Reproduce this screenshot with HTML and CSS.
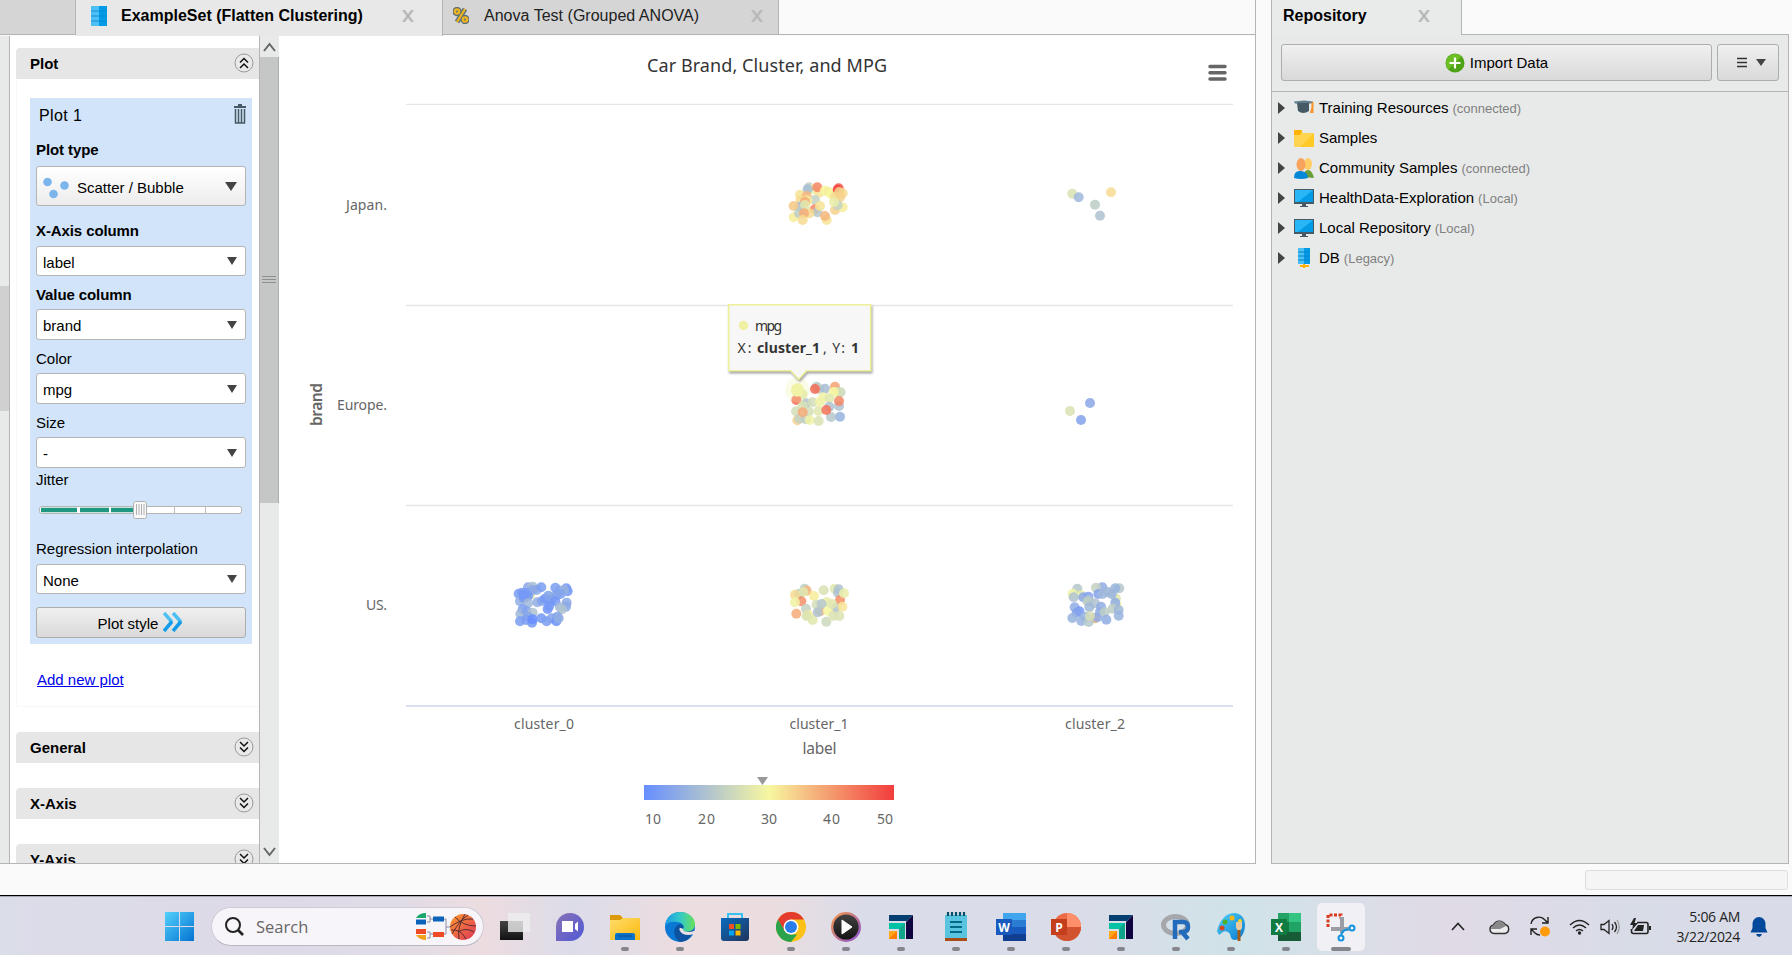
FILE: index.html
```html
<!DOCTYPE html>
<html lang="en">
<head>
<meta charset="utf-8">
<title>ExampleSet (Flatten Clustering)</title>
<link rel="stylesheet" href="styles.css">
</head>
<body>
<svg class="defs" width="0" height="0">
  <defs>
    <linearGradient id="mpg"><stop offset="0" stop-color="#668eff"/><stop offset=".5" stop-color="#f7f7a0"/><stop offset="1" stop-color="#f23c3c"/></linearGradient>
    <linearGradient id="win" x2="1" y2="1"><stop offset="0" stop-color="#52d1fb"/><stop offset="1" stop-color="#0473d2"/></linearGradient>
    <linearGradient id="fold" x2="1" y2="1"><stop offset="0" stop-color="#ffdc6a"/><stop offset="1" stop-color="#fbb90f"/></linearGradient>
    <linearGradient id="chat" x2="1" y2="1"><stop offset="0" stop-color="#8a72b5"/><stop offset="1" stop-color="#5059d6"/></linearGradient>
    <linearGradient id="edge" x2="1" y2="0"><stop offset="0" stop-color="#1a9be8"/><stop offset=".5" stop-color="#35c8c8"/><stop offset="1" stop-color="#68e05a"/></linearGradient>
    <linearGradient id="ring" x2="1" y2="1"><stop offset="0" stop-color="#f79a4a"/><stop offset="1" stop-color="#8a4fd0"/></linearGradient>
    <linearGradient id="store" x2="1" y2="1"><stop offset="0" stop-color="#0a6cc0"/><stop offset="1" stop-color="#20345c"/></linearGradient>
    <linearGradient id="ball" x2="1" y2="1"><stop offset="0" stop-color="#ff9a2e"/><stop offset="1" stop-color="#dd3558"/></linearGradient>
    <linearGradient id="paint" x2="1" y2="1"><stop offset="0" stop-color="#4fd4f8"/><stop offset="1" stop-color="#0a78d0"/></linearGradient>
    <linearGradient id="dark" x2="0" y2="1"><stop offset="0" stop-color="#444"/><stop offset="1" stop-color="#111"/></linearGradient>
  </defs>
  <symbol id="close" viewBox="0 0 14 14"><path d="M1 1h3l3 4 3-4h3L8.700 7 13 13h-3L7 9l-3 4H1l4.300-6z" fill="#b9b9b9"/></symbol>
  <symbol id="up2" viewBox="0 0 20 20"><circle cx="10" cy="10" r="9" fill="#e9e9e9" stroke="#999"/><path d="M6 9.500L10 5.500l4 4M6 15l4-4 4 4" fill="none" stroke="#111" stroke-width="1.500"/></symbol>
  <symbol id="down2" viewBox="0 0 20 20"><circle cx="10" cy="10" r="9" fill="#e9e9e9" stroke="#999"/><path d="M6 5l4 4 4-4M6 10.500l4 4 4-4" fill="none" stroke="#111" stroke-width="1.500"/></symbol>
  <symbol id="stack" viewBox="0 0 16 20"><path d="M0 0h8v20H0z" fill="#4cc0f5"/><path d="M8 0h8v20H8z" fill="#039be5"/><path d="M0 5h16M0 10h16M0 15h16" stroke="#0284cc" stroke-width=".8"/></symbol>
  <symbol id="monitor" viewBox="0 0 20 18"><path d="M0 0h20v15H0z" fill="#455a64"/><path d="M1 1h18v12H1z" fill="#039be5"/><path d="M1 1h18L4 13H1z" fill="#29b6f6"/><path d="M8 15h4v2h2v1H6v-1h2z" fill="#455a64"/></symbol>
  <symbol id="flow" viewBox="0 0 24 24"><path d="M0 0h24l-6 6H0z" fill="#033f70"/><path d="M24 0v24h-7V7z" fill="#0f0340"/><path d="M0 8h16v16h-6V13H0z" fill="#10a58b"/><path d="M0 8h16l-6 6H0z" fill="#00c2a4"/><path d="M0 16h8v8H0z" fill="#ff7d05"/><path d="M0 16h8l-8 8z" fill="#ffa61a"/></symbol>
</svg>

<div class="app">
  <section class="results">
    <div class="tabs">
      <div class="tab tab-stub"></div>
      <div class="tab tab-set active"><svg width="16" height="20"><use href="#stack"/></svg><span class="t-set">ExampleSet (Flatten Clustering)</span><svg class="x" width="14" height="14"><use href="#close"/></svg></div>
      <div class="tab tab-anova"><svg width="16" height="17" viewBox="0 0 16 17" fill="none"><g stroke="#5e7078" stroke-width="5"><circle cx="4" cy="4.500" r="2.200"/><circle cx="12" cy="12.500" r="2.200"/><path d="M12 2L4 15"/></g><g stroke="#f1b51c" stroke-width="2.200"><circle cx="4" cy="4.500" r="2.200"/><circle cx="12" cy="12.500" r="2.200"/><path d="M12 2L4 15"/></g></svg><span class="t-anova">Anova Test (Grouped ANOVA)</span><svg class="x" width="14" height="14"><use href="#close"/></svg></div>
      <div class="tab-rest"></div>
    </div>
    <div class="content">
      <div class="rail"><div class="rail-thumb"></div></div>
      <div class="panel">
        <div class="head"><b>Plot</b><svg width="20" height="20"><use href="#up2"/></svg></div>
        <div class="body">
          <div class="card">
            <div class="card-title"><span>Plot 1</span><svg width="12" height="20" viewBox="0 0 12 20"><path d="M4 0h4v2H4zM0 2h12v2H0z" fill="#455a64"/><path d="M1.500 5v14h9V5M4.500 5v14M7.500 5v14" fill="none" stroke="#455a64" stroke-width="1.500"/></svg></div>
            <label class="bold l28">Plot type</label>
            <div class="select big"><svg width="26" height="22" viewBox="0 0 26 22" fill="#7cb5ec"><circle cx="4.500" cy="5" r="4.300"/><circle cx="21.500" cy="8.500" r="4.300"/><circle cx="10.500" cy="17" r="4.300"/></svg><span>Scatter / Bubble</span><i></i></div>
            <label class="bold l40">X-Axis column</label>
            <div class="select s30"><span>label</span><i></i></div>
            <label class="bold">Value column</label>
            <div class="select"><span>brand</span><i></i></div>
            <label>Color</label>
            <div class="select"><span>mpg</span><i></i></div>
            <label>Size</label>
            <div class="select"><span>-</span><i></i></div>
            <label class="l28">Jitter</label>
            <svg class="slider" width="204" height="20" viewBox="0 0 204 20"><rect x=".5" y="6.500" width="202" height="7" rx="2" fill="#fff" stroke="#b5b5b5"/><path d="M2 10h36M41 10h29M72 10h24" stroke="#1e9880" stroke-width="4.500"/><path d="M135.500 6v8M166.500 6v8" stroke="#bbb"/><rect x="94.500" y="1.500" width="13" height="17" rx="2" fill="#f8f8f8" stroke="#b0b0b0"/><path d="M97.500 4v11M100 4v11M102.500 4v11M105 4v11" stroke="#a0a0a0" stroke-width=".8"/></svg>
            <label class="l41">Regression interpolation</label>
            <div class="select s30"><span>None</span><i></i></div>
            <div class="button style-btn"><span>Plot style</span><svg width="21" height="20" viewBox="0 0 21 20" fill="none" stroke-width="3.500"><path d="M1 1l8 9M10 1l8 9" stroke="#4cc0f5"/><path d="M9 9.500L1 19M18 9.500L10 19" stroke="#129be8"/></svg></div>
          </div>
          <a class="add">Add new plot</a>
        </div>
        <div class="head"><b>General</b><svg width="20" height="20"><use href="#down2"/></svg></div>
        <div class="head gap"><b>X-Axis</b><svg width="20" height="20"><use href="#down2"/></svg></div>
        <div class="head gap"><b>Y-Axis</b><svg width="20" height="20"><use href="#down2"/></svg></div>
      </div>
      <div class="scroll">
        <svg width="20" height="21" fill="none" stroke="#666" stroke-width="2"><path d="M4 15l5.500-7L15 15"/></svg>
        <div class="thumb"><svg width="14" height="9"><path d="M0 .5h14M0 3.500h14M0 6.500h14" stroke="#8d8f8e"/></svg></div>
        <svg class="sdown" width="20" height="21" fill="none" stroke="#666" stroke-width="2"><path d="M4 6l5.500 7L15 6"/></svg>
      </div>
      <svg class="chart" width="976" height="827" viewBox="279 36 976 827">
        <path d="M406 104.300h827M406 305.500h827M406 505.500h827" stroke="#e6e6e6" stroke-width="1.300"/>
        <path d="M406 706h827" stroke="#ccd6eb" stroke-width="1.500"/>
        <text class="title" x="647" y="72" textLength="240">Car Brand, Cluster, and MPG</text>
        <g class="axis" text-anchor="end"><text x="387" y="210" textLength="41">Japan.</text><text x="387" y="410" textLength="50">Europe.</text><text x="387" y="610" textLength="21">US.</text></g>
        <text class="name strong" transform="translate(322 404.500) rotate(-90)" text-anchor="middle" textLength="43">brand</text>
        <g class="axis" text-anchor="middle"><text x="544" y="729" textLength="60">cluster_0</text><text x="819" y="729" textLength="59">cluster_1</text><text x="1095" y="729" textLength="60">cluster_2</text></g>
        <text class="name" x="819.500" y="754" text-anchor="middle" textLength="34">label</text>
        <path d="M1210 66.500h15M1210 72.700h15M1210 79h15" stroke="#666" stroke-width="3.500" stroke-linecap="round"/>
        <rect x="644" y="785" width="250" height="15" fill="url(#mpg)"/><path d="M757 777h11l-5.500 8z" fill="#999"/>
        <g class="axis"><text x="645" y="824" textLength="16">10</text><text x="698" y="824" textLength="17">20</text><text x="761" y="824" textLength="16">30</text><text x="823" y="824" textLength="17">40</text><text x="877" y="824" textLength="16">50</text></g>
        <g id="points"></g>
        <g class="tip"><path d="M728.700 304.700h142v66h-64l-8 8.500-8-8.500h-62z" fill="#f7f7f7" stroke="#eef09a" stroke-width="1.600"/></g>
        <circle cx="743.500" cy="325.500" r="4.700" fill="#f0f0a3"/>
        <g class="tiptext"><text x="755" y="331" textLength="27">mpg</text><text x="737.500" y="353" textLength="14">X:</text><text class="b" x="757" y="353" textLength="63">cluster_1</text><text x="823" y="353" textLength="22">, Y:</text><text class="b" x="851" y="353">1</text></g>
      </svg>
    </div>
  </section>

  <section class="repo">
    <div class="rtabs"><div class="rtab"><b>Repository</b><svg width="14" height="14"><use href="#close"/></svg></div><div class="rrest"></div></div>
    <div class="rpanel">
      <div class="toolbar">
        <div class="button import"><svg width="20" height="20" viewBox="0 0 20 20"><circle cx="10" cy="10" r="9.500" fill="#4ea314"/><path d="M3.300 16.700A9.500 9.500 0 0116.700 3.300z" fill="#6bbf25"/><path d="M10 4.500v11M4.500 10h11" stroke="#fff" stroke-width="2.200"/></svg><span>Import Data</span></div>
        <div class="button more"><svg width="10" height="11"><path d="M0 1.500h10M0 5.500h10M0 9.500h10" stroke="#333" stroke-width="1.600"/></svg><i></i></div>
      </div>
      <ul class="tree">
        <li><i></i><svg width="20" height="20" viewBox="0 0 20 20"><path d="M0 3.500l10-1 9 1-1 2H1z" fill="#607d8b"/><path d="M3 5h12v8q-6 4-11 0z" fill="#455a64"/><path d="M17.500 4v5l-1.500 6h3.500V4z" fill="#f8932b"/></svg><span class="w1">Training Resources</span><small>(connected)</small></li>
        <li><i></i><svg width="20" height="20" viewBox="0 0 20 20"><path d="M0 2h8v3h12v14H0z" fill="#ffca28"/><path d="M0 5h20L6 19H0z" fill="#ffd54f"/><path d="M0 2h7l1.500 3H6.500v2H0z" fill="#ffb300"/></svg><span>Samples</span></li>
        <li><i></i><svg width="20" height="21" viewBox="0 0 20 21"><ellipse cx="14" cy="6" rx="4" ry="6" fill="#ffcc66"/><path d="M9 19q1-7 5-7t6 8z" fill="#689f38"/><ellipse cx="7" cy="6.500" rx="4.500" ry="6.500" fill="#f8a35d"/><path d="M0 20q0-8 7-7t7 7q-7 2-14 0z" fill="#0388d8"/></svg><span>Community Samples</span><small>(connected)</small></li>
        <li><i></i><svg width="20" height="18"><use href="#monitor"/></svg><span class="w4">HealthData-Exploration</span><small>(Local)</small></li>
        <li><i></i><svg width="20" height="18"><use href="#monitor"/></svg><span>Local Repository</span><small>(Local)</small></li>
        <li><i></i><svg width="20" height="20" viewBox="0 0 20 20"><path d="M4 0h6v16H4z" fill="#4cc0f5"/><path d="M10 0h6v16h-6z" fill="#039be5"/><path d="M4 4h12M4 8h12M4 12h12" stroke="#0284cc"/><path d="M9 16h2v1h4v2h-4v1H9v-1H6v-2h3z" fill="#ffb300"/></svg><span>DB</span><small>(Legacy)</small></li>
      </ul>
    </div>
  </section>
</div>
<div class="status"><div class="progress"></div></div>

<footer class="taskbar">
  <svg class="start" width="29" height="29" viewBox="0 0 29 29"><path d="M0 0h14v14H0zM15 0h14v14H15zM0 15h14v14H0zM15 15h14v14H15z" fill="url(#win)"/></svg>
  <div class="search">
    <svg width="19" height="19" viewBox="0 0 19 19" fill="none" stroke="#222" stroke-width="2"><circle cx="8" cy="8" r="7"/><path d="M13 13l5 5" stroke-width="2.600"/></svg>
    <span>Search</span>
    <svg class="bracket" width="62" height="30" viewBox="0 0 62 30"><g fill="none" stroke="#8b8aa0"><path d="M11 4h3v6h-3M14 7h4M11 20h3v6h-3M14 22h4M27 7h3v15h-3M30 15h4"/></g><path d="M0 6q3-5 10-5v5z" fill="#18a76a"/><path d="M0 7.500h10v5H0zM17 4.500h11v5H17z" fill="#0a62bb"/><path d="M0 17h10v5H0zM17 20h11v5H17z" fill="#ee4a23"/><path d="M0 23h10v5q-7 0-10-5z" fill="#f5a01d"/><circle cx="47" cy="15" r="13" fill="url(#ball)"/><path d="M39 5q8 9 21 9M34 15q12-9 23-8M36 22q8-14 16-19M43 27q-2-12 6-25M50 27q-5-10-15-9M58 20q-8-5-16 0" fill="none" stroke="#4b2733" stroke-width=".9"/></svg>
  </div>
  <div class="icons">
    <div><svg viewBox="0 0 30 30"><path d="M0 9h23v19H0z" fill="url(#dark)"/><path d="M8 1h22v19H8z" fill="#eee" opacity=".8"/></svg></div>
    <div><svg viewBox="0 0 30 30"><path d="M1 29V15A14 14 0 1115 29z" fill="url(#chat)"/><path d="M7 9h11v11H7zM20 12l3-2.500v10L20 17z" fill="#fff"/></svg></div>
    <div class="run"><svg viewBox="0 0 30 30"><path d="M0 3h10l3 3v5H0z" fill="#dc9a09"/><path d="M0 8h10l3-2h17v22H0z" fill="url(#fold)"/><path d="M5 28v-5q0-2 2-2h16q2 0 2 2v5z" fill="#0b72cc"/><path d="M8 24h14" stroke="#0a4a8c"/></svg></div>
    <div class="run"><svg viewBox="0 0 30 30"><circle cx="15" cy="15" r="15" fill="#0a78d4"/><path d="M0 14C1 5 7 0 15 0c9 0 15 6 15 12 0 5-4 8-9 8-3 0-4-1-3-3 2-4-2-7-6-7C6 9 2 11 0 14z" fill="url(#edge)"/><path d="M18 17q-1 3 3 3t8-2q1 2-2 4-3 7-12 8C8 26 7 14 15 12q5 1 3 5z" fill="#0e53a1"/><path d="M18 17c-2-2-5-1-3 2 2 4 8 5 14 3l2-4q-4 2-8 2-5 0-5-3z" fill="#e9dfe5"/></svg></div>
    <div><svg viewBox="0 0 30 30"><path d="M8 7V2h14v5" fill="none" stroke="#38c2f1" stroke-width="2"/><path d="M1 6h28v20q0 3-3 3H4q-3 0-3-3z" fill="url(#store)"/><path d="M9 12h5v5H9z" fill="#f25022"/><path d="M15.500 12h5v5h-5z" fill="#7fba00"/><path d="M9 18.500h5v5H9z" fill="#00a4ef"/><path d="M15.500 18.500h5v5h-5z" fill="#ffb900"/></svg></div>
    <div class="run"><svg viewBox="0 0 30 30"><circle cx="15" cy="15" r="15" fill="#fbc116"/><path d="M2 7.500A15 15 0 0128 7.500H15L8 19z" fill="#e33b2e"/><path d="M2 7.500L8.500 18.700 15 22.500h6L15 30A15 15 0 012 7.500z" fill="#2ba24c"/><circle cx="15" cy="15" r="7.500" fill="#fff"/><circle cx="15" cy="15" r="6" fill="#2a7de9"/></svg></div>
    <div class="run"><svg viewBox="0 0 30 30"><circle cx="15" cy="15" r="13.800" fill="url(#dark)" stroke="url(#ring)" stroke-width="2.400"/><path d="M11 8v14l10-7z" fill="#fff" stroke="#fff" stroke-linejoin="round"/></svg></div>
    <div class="run"><svg class="small" viewBox="0 0 24 24"><use href="#flow"/></svg></div>
    <div class="run"><svg viewBox="0 0 30 30"><path d="M4 3h22v23H4z" fill="#58c4e0"/><path d="M4 26h22v3H4z" fill="#a84c13"/><path d="M9 10h12M9 15h12M9 20h12" stroke="#056a83" stroke-width="1.800"/><path d="M7 0v4M11 0v4M15 0v4M19 0v4M23 0v4" stroke="#07506a" stroke-width="2.200"/></svg></div>
    <div class="run"><svg viewBox="0 0 30 30"><path d="M7 1h23v28H7z" fill="#2b7cd3"/><path d="M7 1h23v7H7z" fill="#41a5ee"/><path d="M7 15h23v7H7z" fill="#185abd"/><path d="M7 22h23v7H7z" fill="#103f91"/><path d="M0 7h16v16H0z" fill="#185abd"/><text x="8" y="19.500">W</text></svg></div>
    <div class="run"><svg viewBox="0 0 30 30"><circle cx="16" cy="15" r="14" fill="#ed6c47"/><path d="M16 1a14 14 0 0114 14H16z" fill="#ff8f6b"/><path d="M2 15h28a14 14 0 01-28 0z" fill="#d35230"/><path d="M0 7h16v16H0z" fill="#c43e1c"/><text x="8" y="19.500">P</text></svg></div>
    <div class="run"><svg class="small" viewBox="0 0 24 24"><use href="#flow"/></svg></div>
    <div class="run"><svg viewBox="0 0 30 30"><ellipse cx="14.500" cy="13" rx="12" ry="8.500" fill="none" stroke="#a5a7ab" stroke-width="5"/><path d="M14 27V10h8q5 0 5 5t-5 5h-4M21 20l6 7" fill="none" stroke="#246bbb" stroke-width="4.500"/></svg></div>
    <div class="run"><svg viewBox="0 0 30 30"><path d="M1 19C3 10 9 1 18 1c7 0 11 5 11 12 0 8-4 14-10 15-6 0-3-6-7-8s-6 1-9 3z" fill="url(#paint)"/><circle cx="9" cy="10" r="2.500" fill="#4fae2a"/><circle cx="16" cy="6" r="2.500" fill="#f5b51b"/><circle cx="6" cy="16" r="2.500" fill="#d24726"/><circle cx="24" cy="9" r="2" fill="#f5d21b"/><path d="M20 10h6v6l-2 3h-2l-2-3z" fill="#e8c9a0"/><path d="M23 18v11" stroke="#a35a16" stroke-width="3"/></svg></div>
    <div class="run"><svg viewBox="0 0 30 30"><path d="M7 1h23v28H7z" fill="#21a366"/><path d="M18 1h12v9H18z" fill="#33c481"/><path d="M7 10h11v10H7z" fill="#107c41"/><path d="M7 20h23v9H7z" fill="#185c37"/><path d="M0 7h16v16H0z" fill="#107c41"/><text x="8" y="19.500">X</text></svg></div>
    <div class="run current"><svg viewBox="0 0 30 30" fill="none"><path d="M2 15V3h13v4" stroke="#d83b1e" stroke-width="3" stroke-dasharray="3 1.500"/><path d="M16 5v16M5 17h18" stroke="#9b9fa5" stroke-width="4"/><circle cx="15" cy="26" r="2.500" stroke="#1494df" stroke-width="2"/><circle cx="26" cy="16" r="2.500" stroke="#1494df" stroke-width="2"/><path d="M15 23l2-4 5-2" stroke="#1494df" stroke-width="2"/></svg></div>
  </div>
  <div class="tray">
    <svg width="14" height="9" viewBox="0 0 14 9" fill="none" stroke="#222" stroke-width="1.600"><path d="M1 8l6-6.500L13 8"/></svg>
    <svg class="cloud" width="21" height="16" viewBox="0 0 21 16"><path d="M5 14.500a4.300 4.300 0 01-.5-8.500A6.500 6.500 0 0116 5.500a4.600 4.600 0 010 9z" fill="#ececef" stroke="#333" stroke-width="1.500"/><path d="M2 10Q3 6 5 6 8 0 14 3l3 4-6 3z" fill="#888"/></svg>
    <svg class="sync" width="22" height="21" viewBox="0 0 22 21" fill="none" stroke="#222" stroke-width="1.400"><path d="M2 8a8 8 0 0114-4l3 3M19 1v6h-6M2 19v-6h6M2 13l4 4q2 2 5 2"/><circle cx="16" cy="15.500" r="5" fill="#ff9a0a" stroke="none"/></svg>
    <svg class="wifi" width="21" height="16" viewBox="0 0 21 16" fill="none" stroke="#222" stroke-width="1.400"><path d="M1 6q9.500-9 19 0M4 9q6.500-6 13 0M7 12q3.500-3.200 7 0"/><circle cx="10.500" cy="14" r="1" fill="#222"/></svg>
    <svg class="vol" width="20" height="16" viewBox="0 0 20 16" fill="none" stroke="#222" stroke-width="1.300"><path d="M1 5.500h3l5-4v13l-5-4H1zM12 5q2 3 0 6M14.500 3q4 5 0 10"/><path d="M17 1q4.500 7 0 14" stroke="#999"/></svg>
    <svg class="bat" width="22" height="18" viewBox="0 0 22 18"><path d="M8 4.500h9.500q1.500 0 1.500 2v7q0 2-1.500 2h-13q-2 0-2-2V11" fill="none" stroke="#222" stroke-width="1.600"/><path d="M20 8h2v4h-2zM5 13h9l1-6H9z" fill="#222"/><path d="M5 0L1 7h3l-1 5 6-7H5.500L7 0z" fill="#222"/></svg>
    <div class="clock"><span>5:06 AM</span><span>3/22/2024</span></div>
    <svg class="bell" width="18" height="20" viewBox="0 0 18 20" fill="#04489c"><path d="M9 0a6.500 6.500 0 016.500 6.500V11l2 4.500H.5l2-4.500V6.500A6.500 6.500 0 019 0zM6 17h6q-1 3-3 3t-3-3z"/></svg>
  </div>
</footer>
<script src="points.js"></script>
</body>
</html>
```
FILE: styles.css
```css
* { box-sizing: border-box; }
body { margin: 0; width: 1792px; height: 955px; overflow: hidden; display: flex; flex-direction: column; background: #fafafa; color: #000; font: 15px/18px "Liberation Sans", Arial, sans-serif; }
svg { display: block; flex: none; }
.defs { position: absolute; }
.app { display: flex; height: 864px; }

.results { width: 1256px; display: flex; flex-direction: column; border-right: 1px solid #b5b5b5; border-bottom: 1px solid #b5b5b5; }
.tabs { display: flex; height: 36px; }
.tab { display: flex; align-items: center; height: 35px; background: #d5d5d5; border-right: 1px solid #b5b5b5; border-bottom: 1px solid #b5b5b5; font-size: 16px; padding-bottom: 3px; }
.tab-stub { width: 76px; }
.tab.active { width: 367px; height: 36px; background: #e8e8e8; border-bottom: 0; font-weight: bold; padding-left: 15px; padding-bottom: 4px; }
.tab-anova { width: 336px; padding-left: 10px; color: #222; }
.t-set { margin-left: 14px; width: 280px; white-space: nowrap; }
.t-anova { margin-left: 15px; width: 266px; letter-spacing: .02px; white-space: nowrap; }
.tab-rest { flex: 1; height: 35px; border-bottom: 1px solid #b5b5b5; }
.content { display: flex; height: 827px; background: #fff; }
.rail { width: 10px; background: #e8eae9; border-right: 1px solid #b5b5b5; padding-top: 250px; }
.rail-thumb { height: 125px; background: #cfd0cf; }

.panel { width: 249px; height: 827px; overflow: hidden; padding: 12px 0 0 6px; }
.head { display: flex; justify-content: space-between; align-items: center; height: 31px; background: #e6e6e6; border-radius: 4px 0 0 0; padding: 0 5px 2px 14px; }
.head b { padding-top: 3px; }
.head.gap { margin-top: 25px; }
.body { height: 628px; margin-bottom: 25px; border: 1px solid #f7f7f7; border-top: 0; border-right: 0; padding: 19px 0 0 13px; }
.card { width: 222px; height: 546px; background: #d1e4f9; padding: 0 6px; display: flex; flex-direction: column; }
.card-title { display: flex; justify-content: space-between; height: 40px; padding: 6px 0 0 3px; font-size: 16px; }
.card-title span { padding-top: 3px; letter-spacing: .4px; }
label { height: 33px; display: flex; align-items: flex-end; padding-bottom: 5px; }
label.bold { font-weight: bold; letter-spacing: -.1px; }
label.l28 { height: 28px; padding-bottom: 7px; }
label.l40 { height: 40px; padding-bottom: 6px; }
label.l41 { height: 44px; padding-bottom: 6px; }
.select { display: flex; align-items: center; height: 31px; background: #fff; border: 1px solid #b5b5b5; border-radius: 3px; padding: 3px 8px 0 6px; }
.select.s30 { height: 30px; }
.select.big { height: 40px; background: linear-gradient(#fff, #ececec); }
.select.big span { margin-left: 8px; padding-bottom: 0; }
.select i, .more i { margin-left: auto; border: 5px solid transparent; border-top: 8px solid #444; border-bottom: 0; margin-bottom: 3px; }
.select.big i { border-width: 9px 6px 0; }
.slider { margin: 4px 0 0 3px; }
.button { display: flex; align-items: center; justify-content: center; background: linear-gradient(#f0f0f0, #d9d9d9); border: 1px solid #adadad; border-radius: 3px; }
.style-btn { height: 31px; margin-top: 13px; padding-top: 2px; gap: 5px; }
.style-btn svg { margin-top: -3px; }
.add { display: block; color: #00e; text-decoration: underline; margin: 27px 0 0 7px; }

.scroll { width: 20px; background: #e8eae9; display: flex; flex-direction: column; border-left: 1px solid #b5b5b5; }
.thumb { height: 446px; background: #c5c6c6; border-right: 1px solid #adadad; padding: 219px 0 0 2px; }
.sdown { margin-top: auto; }

.title { font: 18px "Noto Sans", sans-serif; fill: #333; }
.axis, .tiptext { font: 14px "Noto Sans", sans-serif; fill: #666; }
.name { font: 15.500px "Noto Sans", sans-serif; fill: #666; }
.name.strong { font-weight: 600; }
.tiptext { fill: #333; }
.b { font-weight: bold; }
.tip { filter: drop-shadow(1px 2px 1px rgba(0,0,0,.35)); }
text { white-space: pre; }

.repo { margin-left: 15px; width: 518px; display: flex; flex-direction: column; }
.rtabs { display: flex; height: 35px; }
.rtab { display: flex; align-items: center; width: 191px; background: #e9eaea; border: 1px solid #b5b5b5; border-width: 0 1px; padding: 0 0 3px 11px; font-size: 16px; }
.rtab b { width: 134px; }
.rrest { flex: 1; border-bottom: 1px solid #b5b5b5; }
.rpanel { flex: 1; background: #e8eae9; border: 1px solid #b5b5b5; border-top: 0; }
.toolbar { display: flex; gap: 5px; height: 57px; padding: 9px 8px 10px 9px; border-bottom: 1px solid #b5b5b5; }
.import { width: 431px; gap: 5px; }
.more { width: 62px; gap: 9px; padding-left: 6px; }
.more i { margin: 0; border-width: 7px 5px 0; }
.tree { list-style: none; margin: 0; padding: 1px 0 0 6px; }
.tree li { display: flex; align-items: center; height: 30px; }
.tree i { border: 6px solid transparent; border-left: 7px solid #444; border-right: 0; margin-right: 9px; }
.tree span { margin-left: 5px; }
.tree small { font-size: 13px; color: #808080; margin: 2px 0 0 4px; }

.status { height: 32px; border-bottom: 1.500px solid #000; padding: 6px 4px 0 0; }
.progress { margin-left: auto; width: 203px; height: 20px; background: #f5f5f5; border: 1px solid #ddd; border-radius: 3px; }

.taskbar { height: 59px; display: flex; align-items: center; background: linear-gradient(90deg, #dbdde9 0, #ded9e7 15%, #e0dce7 22%, #ecdce0 27%, #dcdce9 32%, #ecdde0 38%, #ebdddf 43%, #dbdce9 48%, #d9dde8 62%, #cfe3e8 69%, #dcdde7 77%, #e0dae6 81%, #d8dce7 91%, #d9dce8 100%); border-top: 1px solid #a9a9b3; padding-top: 1px; }
.start { margin-left: 165px; }
.search { margin-left: 17px; width: 273px; height: 39px; border-radius: 20px; background: #f7f5f9; border: 1px solid #cfcbd6; border-bottom-color: #b9b7c0; display: flex; align-items: center; padding: 0 5px 0 13px; font: 16.500px "Open Sans", sans-serif; color: #666; }
.search span { margin-left: 12px; }
.bracket { margin-left: auto; margin-right: 0; }
.icons { display: flex; margin-left: 3.500px; }
.icons div { width: 55.100px; height: 58px; display: flex; flex-direction: column; align-items: center; padding-top: 14px; }
.icons svg { width: 30px; height: 30px; }
.icons svg.small { width: 24px; height: 24px; margin: 3px 0; }
.icons text { font: bold 12px "Open Sans", sans-serif; fill: #fff; text-anchor: middle; }
.icons .run::after { content: ""; width: 8px; height: 4px; border-radius: 2px; background: #85858c; margin-top: 5px; }
.icons .current { width: 48px; height: 48px; margin: 5px 0 0 3px; padding-top: 9px; background: #f0f0f5; border-radius: 5px; }
.icons .run.current::after { width: 20px; }
.tray { display: flex; align-items: center; margin-left: auto; padding-right: 24px; }
.cloud { margin-left: 24px; }
.sync { margin-left: 19px; }
.wifi { margin-left: 18px; }
.vol { margin-left: 10px; }
.bat { margin-left: 9px; }
.clock { margin-left: 10px; width: 79px; display: flex; flex-direction: column; align-items: flex-end; font: 14px/20px "Open Sans", sans-serif; letter-spacing: -.3px; color: #222; }
.bell { margin-left: 10px; }
```
FILE: points.js
```javascript
// Each group has an origin, and points as [x, y, mpg] in thirds of a pixel.
const groups = [
  { at: [500, 570], points: [
    [90,75,26],[158,80,26],[84,52,15],[98,50,19],[110,60,16],[98,60,15],[124,52,13],[166,53,13],[199,55,12],[203,64,12],[180,62,14],[192,60,17],[56,71,13],[66,68,13],[78,68,13],[60,94,16],[72,84,12],[84,78,12],[70,74,12],[84,100,18],[112,97,16],[152,92,13],[126,93,14],[135,86,12],[170,76,13],[182,72,14],[145,77,14],[166,94,12],[200,98,15],[198,110,15],[180,112,18],[186,118,20],[143,117,11],[68,118,13],[61,132,18],[80,124,14],[98,128,20],[84,140,15],[78,150,13],[60,154,13],[96,158,12],[98,148,10],[124,145,12],[140,154,13],[155,145,14],[169,154,11],[172,140,14],[176,145,16],[148,108,12]] },
  { at: [500, 570], points: [
    [914,56,22],[920,62,37],[897,72,20],[910,66,27],[904,94,41],[885,74,33],[885,97,29],[942,78,31],[971,61,26],[1004,56,27],[1014,68,20],[1016,58,20],[1020,90,41],[1032,70,28],[889,131,38],[918,116,23],[925,135,31],[920,138,26],[938,150,27],[960,124,37],[950,104,25],[953,127,20],[980,96,28],[965,102,21],[1006,115,20],[984,123,30],[996,102,27],[1027,110,32],[979,155,24],[1000,138,26],[1018,138,26]] },
  { at: [780, 170], points: [
    [87,52,23],[100,58,29],[83,58,19],[118,68,32],[112,52,42],[60,74,32],[80,78,37],[135,62,30],[145,65,31],[153,73,30],[176,55,47],[173,59,49],[165,80,33],[188,70,33],[178,66,34],[180,82,34],[62,90,33],[105,90,23],[82,92,31],[75,95,38],[60,110,19],[41,108,35],[75,105,27],[104,118,42],[112,127,21],[120,108,32],[165,120,34],[188,112,31],[173,106,23],[162,96,28],[41,142,31],[57,130,22],[88,130,33],[72,130,38],[68,150,33],[140,150,32],[135,138,37],
    [877,71,26],[896,82,18],[993,67,33],[945,104,22],[960,137,20]] },
  { at: [700, 290], points: [
    [308,313,27],[289,330,45],[350,290,21],[358,298,23],[345,297,45],[375,296,19],[405,290,39],[422,307,24],[412,306,25],[401,306,30],[417,348,20],[417,333,42],[318,340,20],[337,337,25],[308,348,26],[288,364,25],[326,365,25],[292,391,34],[298,386,23],[318,388,22],[308,367,38],[329,390,29],[355,363,27],[356,393,26],[370,322,29],[388,325,27],[360,335,29],[388,350,20],[393,381,21],[379,360,44],[420,380,17],
    [1110,363,26],[1170,339,15],[1143,390,14]] },
  { at: [1040, 570], points: [
    [165,145,38],[230,105,30],[228,85,27],[112,56,21],[98,71,29],[124,76,28],[101,82,20],[130,82,15],[145,80,14],[187,52,16],[168,53,23],[175,72,14],[188,72,18],[238,55,21],[226,55,17],[215,72,17],[204,66,18],[145,90,20],[143,95,22],[165,100,20],[148,112,18],[226,98,16],[218,116,22],[236,120,18],[236,137,17],[104,112,16],[118,124,12],[110,128,14],[97,144,17],[124,153,17],[135,140,17],[146,156,21],[172,142,16],[183,110,16],[180,125,16],[150,138,25],[194,127,22],[199,149,16]] }
];

const stops = [[102, 142, 255], [247, 247, 160], [242, 60, 60]];

function color(mpg) {
  const t = (mpg - 10) / 20;
  const i = t < 1 ? 0 : 1;
  return "rgb(" + stops[i].map((c, k) => Math.round(c + (stops[i + 1][k] - c) * (t - i))).join(",") + ")";
}

function dot(x, y, r, mpg, opacity) {
  const c = document.createElementNS("http://www.w3.org/2000/svg", "circle");
  Object.entries({ cx: x, cy: y, r: r, fill: color(mpg), "fill-opacity": opacity }).forEach(([k, v]) => c.setAttribute(k, v));
  document.getElementById("points").appendChild(c);
}

groups.forEach(g => g.points.forEach(p => dot(g.at[0] + p[0] / 3, g.at[1] + p[1] / 3, 5, p[2], 0.86)));
dot(797.5, 390, 12.3, 29, 0.25);
dot(797.5, 390, 6.7, 29, 1);
```
